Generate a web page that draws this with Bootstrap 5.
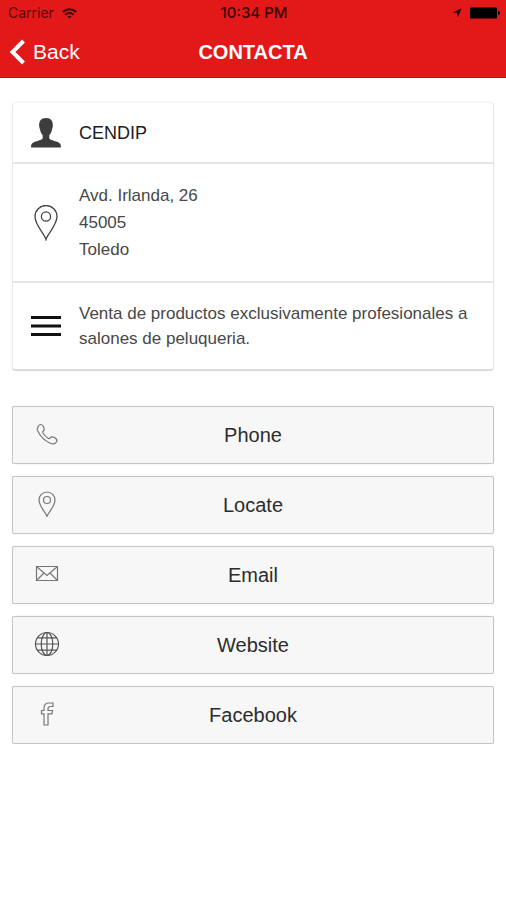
<!DOCTYPE html>
<html lang="es">
<head>
<meta charset="utf-8">
<meta name="viewport" content="width=device-width, initial-scale=1">
<title>Contacta</title>
<link href="https://cdn.jsdelivr.net/npm/bootstrap@5.3.0/dist/css/bootstrap.min.css" rel="stylesheet">
<style>
body{font-family:"Liberation Sans",Arial,sans-serif;background:#fff;color:#222}
.app-head{background:#e21918;border-bottom:1px solid #c5100e}
.status-bar{height:26px;font:400 14px/26px Inter,sans-serif;color:#5c0808;padding:0 6px 0 8px}
.status-bar .clock{font-size:15px;font-weight:500;color:#3a0404}
.title-bar{height:51px;padding:0 8px}
.back-link{color:#fff;font-size:21px;line-height:24px}
.page-title{font-size:20px;line-height:24px;font-weight:700;color:#fff}
.info-card{border:1px solid #e8e8e8;border-top-color:#f4f4f4;border-bottom:2px solid #dcdcdc;border-radius:4px;box-shadow:0 0 2px rgba(0,0,0,.08)}
.info-row{padding:18px 16px;border-bottom:2px solid #e6e6e6;font-size:17px;color:#484848}
.info-row:last-child{border-bottom:0}
.info-row:first-child{padding:15px 16px 14px;font-size:18px;color:#1c1c1c}
.icon-cell{width:34px;flex:none}
.icon-cell svg{display:block;margin:0 auto}
.address{line-height:27px}
.about{line-height:25px}
.action{height:58px;background:#f7f7f7;border:1px solid #c6c6c6;border-radius:2px;box-shadow:0 0 1px #ccc;font-size:20px;color:#2c2c2c;padding:0 20px}
.action:hover{background:#eee}
.action svg{stroke:#777;fill:none}
.side{width:28px;height:28px;flex:none}
.action-list{gap:12px;margin-top:35px}
</style>
</head>
<body>
<header class="app-head">
  <div class="status-bar row g-0 align-items-center">
    <div class="col d-flex align-items-center gap-2"><span>Carrier</span>
      <svg width="15" height="11" viewBox="0 0 15 11" fill="none" stroke="#3a0404" stroke-width="2" aria-hidden="true"><path d="M.8 4C4.600.2 10.400.2 14.200 4M3.300 6.700c2.400-2.300 6-2.300 8.400 0"/><path d="M7.500 10.500 5.400 8.500q2.100-1.700 4.200 0z" fill="#3a0404" stroke="none"/></svg>
    </div>
    <div class="col-auto clock">10:34 PM</div>
    <div class="col d-flex justify-content-end align-items-center gap-2">
      <svg width="10" height="10" viewBox="0 0 10 10" fill="#200" aria-hidden="true"><path d="M9.500.5 5.800 9.500 5 5 .5 4.500z"/></svg>
      <svg width="30" height="12" viewBox="0 0 30 12" aria-hidden="true"><rect width="27" height="11" y=".5" rx="1"/><path d="M28 4q2 0 2 2t-2 2z"/></svg>
    </div>
  </div>
  <nav class="title-bar row g-0 align-items-center">
    <div class="col d-flex"><a href="#" class="back-link d-flex align-items-center gap-2 text-decoration-none">
      <svg width="17" height="26" viewBox="0 0 17 26" fill="none" stroke="#fff" stroke-width="4" aria-hidden="true"><path d="M15.500 2 4.500 13l11 11"/></svg>Back</a></div>
    <h1 class="page-title col-auto m-0">CONTACTA</h1>
    <div class="col"></div>
  </nav>
</header>
<main class="px-2 pt-4">
  <div class="px-1">
    <section class="info-card">
      <div class="info-row d-flex align-items-center gap-3">
        <div class="icon-cell"><svg width="30" height="30" viewBox="0 0 30 30" fill="#3c3c3c" aria-hidden="true"><path d="M15 0c5 0 7.200 3 6.800 8-.1 1.500-.3 2.400-.8 3.200-.5 2.800-1.200 4.500-2.700 6v3c1 2 5 2.400 8.500 3.800 2.500 1.200 3.200 2.500 3.200 5.500H0c0-3 .7-4.300 3.200-5.500 3.500-1.400 7.500-1.800 8.500-3.800v-3c-1.500-1.500-2.200-3.200-2.700-6-.5-.8-.7-1.700-.8-3.200C7.800 3 10 0 15 0z"/></svg></div>
        <div>CENDIP</div>
      </div>
      <div class="info-row d-flex align-items-center gap-3">
        <div class="icon-cell"><svg width="24" height="36" viewBox="0 0 24 36" fill="none" stroke="#444" stroke-width="1.300" aria-hidden="true"><path d="M12 34.500C10.500 29 1 20 1 11.500a11 11 0 0 1 22 0C23 20 13.500 29 12 34.500z"/><circle cx="12" cy="11.500" r="4.600"/></svg></div>
        <address class="address m-0">Avd. Irlanda, 26<br>45005<br>Toledo</address>
      </div>
      <div class="info-row d-flex align-items-center gap-3">
        <div class="icon-cell"><svg width="30" height="20" viewBox="0 0 30 20" fill="#111" aria-hidden="true"><path d="M0 0h30v3H0zM0 8.500h30v3H0zM0 17h30v3H0z"/></svg></div>
        <p class="about m-0">Venta de productos exclusivamente profesionales a salones de peluqueria.</p>
      </div>
    </section>
    <div class="action-list d-grid">
      <button type="button" class="action d-flex align-items-center">
        <svg class="side" viewBox="0 0 28 28" stroke-width="1.200" aria-hidden="true"><path d="M5.300 5.200C7 2.800 9 3.200 10.100 5c1.300 2.200 1.700 3.800.2 5-.9.700-.7 1.500-.2 2.300 1.200 2 2.800 3.700 4.900 4.900.8.500 1.600.5 2.200-.3 1.100-1.500 2.700-1.300 4.900.1 1.900 1.200 2.300 2.300 1.500 3.700-1.300 2.200-3.900 2.700-6.500 1.500C11.500 19.500 7.500 15.500 5 10.500 4.100 8.600 4.200 6.800 5.300 5.200z"/></svg>
        <span class="flex-grow-1">Phone</span><span class="side"></span></button>
      <button type="button" class="action d-flex align-items-center">
        <svg class="side" viewBox="0 0 28 28" stroke-width="1.200" aria-hidden="true"><path d="M14 25.500C13 21.500 6 15.500 6 9a8 8 0 0 1 16 0c0 6.500-7 12.500-8 16.500z"/><circle cx="14" cy="9" r="3.500"/></svg>
        <span class="flex-grow-1">Locate</span><span class="side"></span></button>
      <button type="button" class="action d-flex align-items-center">
        <svg class="side" viewBox="0 0 28 28" stroke-width="1.200" aria-hidden="true"><path d="M3.500 5.500h21v14h-21zM3.500 5.500 14 14.500l10.500-9M3.500 19.500l7.500-7.500M24.500 19.500 17 12"/></svg>
        <span class="flex-grow-1">Email</span><span class="side"></span></button>
      <button type="button" class="action d-flex align-items-center">
        <svg class="side" viewBox="0 0 28 28" stroke-width="1.200" aria-hidden="true"><g stroke="#555"><circle cx="14" cy="13" r="11.500"/><ellipse cx="14" cy="13" rx="5.800" ry="11.500"/><path d="M14 1.500v23M2.500 13h23M4.500 6.800h19M4.500 19.200h19"/></g></svg>
        <span class="flex-grow-1">Website</span><span class="side"></span></button>
      <button type="button" class="action d-flex align-items-center">
        <svg class="side" viewBox="0 0 28 28" stroke-width="1.200" aria-hidden="true"><path d="M11 24V12.800H8.500V9.500H11V7.300C11 3.800 13 2 16 2h4v3.500h-2.500c-1.800 0-2.500.6-2.500 2.200v1.800h4.500l-.5 3.300h-4V24z"/></svg>
        <span class="flex-grow-1">Facebook</span><span class="side"></span></button>
    </div>
  </div>
</main>
<script src="https://cdn.jsdelivr.net/npm/bootstrap@5.3.0/dist/js/bootstrap.bundle.min.js"></script>
</body>
</html>
